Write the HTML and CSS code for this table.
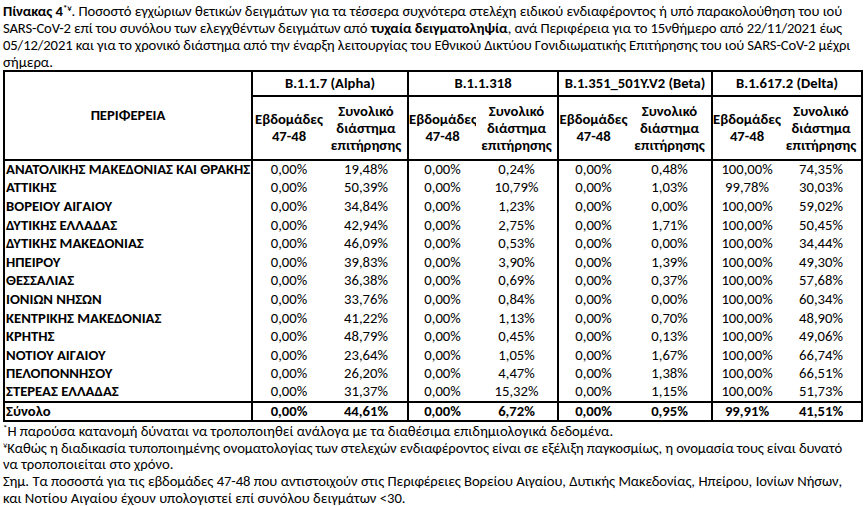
FILE: index.html
```html
<!DOCTYPE html>
<html lang="el">
<head>
<meta charset="utf-8">
<title>Πίνακας 4</title>
<link rel="stylesheet" href="styles.css">
</head>
<body>
<div class="caption">
  <span class="line just"><b>Πίνακας 4<sup>*¥</sup></b>. Ποσοστό εγχώριων θετικών δειγμάτων για τα τέσσερα συχνότερα στελέχη ειδικού ενδιαφέροντος ή υπό παρακολούθηση του ιού</span>
  <span class="line just">SARS-CoV-2 επί του συνόλου των ελεγχθέντων δειγμάτων από <b>τυχαία δειγματοληψία</b>, ανά Περιφέρεια για το 15νθήμερο από 22/11/2021 έως</span>
  <span class="line just">05/12/2021 και για το χρονικό διάστημα από την έναρξη λειτουργίας του Εθνικού Δικτύου Γονιδιωματικής Επιτήρησης του ιού SARS-CoV-2 μέχρι</span>
  <span class="line">σήμερα.</span>
</div>
<table class="data">
  <colgroup>
    <col class="c-region">
    <col class="c-a1"><col class="c-a2">
    <col class="c-b1"><col class="c-b2">
    <col class="c-c1"><col class="c-c2">
    <col class="c-d1"><col class="c-d2">
  </colgroup>
  <thead>
    <tr class="h1">
      <th rowspan="2" class="region-h">ΠΕΡΙΦΕΡΕΙΑ</th>
      <th colspan="2" class="grp">B.1.1.7 (Alpha)</th>
      <th colspan="2" class="grp">B.1.1.318</th>
      <th colspan="2" class="grp">B.1.351_501Y.V2 (Beta)</th>
      <th colspan="2" class="grp">B.1.617.2 (Delta)</th>
    </tr>
    <tr class="h2">
      <th class="gs">Εβδομάδες<br>47-48</th><th>Συνολικό<br>διάστημα<br>επιτήρησης</th>
      <th class="gs">Εβδομάδες<br>47-48</th><th>Συνολικό<br>διάστημα<br>επιτήρησης</th>
      <th class="gs">Εβδομάδες<br>47-48</th><th>Συνολικό<br>διάστημα<br>επιτήρησης</th>
      <th class="gs">Εβδομάδες<br>47-48</th><th>Συνολικό<br>διάστημα<br>επιτήρησης</th>
    </tr>
  </thead>
  <tbody>
    <tr><th>ΑΝΑΤΟΛΙΚΗΣ ΜΑΚΕΔΟΝΙΑΣ ΚΑΙ ΘΡΑΚΗΣ</th><td class="gs">0,00%</td><td>19,48%</td><td class="gs">0,00%</td><td>0,24%</td><td class="gs">0,00%</td><td>0,48%</td><td class="gs">100,00%</td><td>74,35%</td></tr>
    <tr><th>ΑΤΤΙΚΗΣ</th><td class="gs">0,00%</td><td>50,39%</td><td class="gs">0,00%</td><td>10,79%</td><td class="gs">0,00%</td><td>1,03%</td><td class="gs">99,78%</td><td>30,03%</td></tr>
    <tr><th>ΒΟΡΕΙΟΥ ΑΙΓΑΙΟΥ</th><td class="gs">0,00%</td><td>34,84%</td><td class="gs">0,00%</td><td>1,23%</td><td class="gs">0,00%</td><td>0,00%</td><td class="gs">100,00%</td><td>59,02%</td></tr>
    <tr><th>ΔΥΤΙΚΗΣ ΕΛΛΑΔΑΣ</th><td class="gs">0,00%</td><td>42,94%</td><td class="gs">0,00%</td><td>2,75%</td><td class="gs">0,00%</td><td>1,71%</td><td class="gs">100,00%</td><td>50,45%</td></tr>
    <tr><th>ΔΥΤΙΚΗΣ ΜΑΚΕΔΟΝΙΑΣ</th><td class="gs">0,00%</td><td>46,09%</td><td class="gs">0,00%</td><td>0,53%</td><td class="gs">0,00%</td><td>0,00%</td><td class="gs">100,00%</td><td>34,44%</td></tr>
    <tr><th>ΗΠΕΙΡΟΥ</th><td class="gs">0,00%</td><td>39,83%</td><td class="gs">0,00%</td><td>3,90%</td><td class="gs">0,00%</td><td>1,39%</td><td class="gs">100,00%</td><td>49,30%</td></tr>
    <tr><th>ΘΕΣΣΑΛΙΑΣ</th><td class="gs">0,00%</td><td>36,38%</td><td class="gs">0,00%</td><td>0,69%</td><td class="gs">0,00%</td><td>0,37%</td><td class="gs">100,00%</td><td>57,68%</td></tr>
    <tr><th>ΙΟΝΙΩΝ ΝΗΣΩΝ</th><td class="gs">0,00%</td><td>33,76%</td><td class="gs">0,00%</td><td>0,84%</td><td class="gs">0,00%</td><td>0,00%</td><td class="gs">100,00%</td><td>60,34%</td></tr>
    <tr><th>ΚΕΝΤΡΙΚΗΣ ΜΑΚΕΔΟΝΙΑΣ</th><td class="gs">0,00%</td><td>41,22%</td><td class="gs">0,00%</td><td>1,13%</td><td class="gs">0,00%</td><td>0,70%</td><td class="gs">100,00%</td><td>48,90%</td></tr>
    <tr><th>ΚΡΗΤΗΣ</th><td class="gs">0,00%</td><td>48,79%</td><td class="gs">0,00%</td><td>0,45%</td><td class="gs">0,00%</td><td>0,13%</td><td class="gs">100,00%</td><td>49,06%</td></tr>
    <tr><th>ΝΟΤΙΟΥ ΑΙΓΑΙΟΥ</th><td class="gs">0,00%</td><td>23,64%</td><td class="gs">0,00%</td><td>1,05%</td><td class="gs">0,00%</td><td>1,67%</td><td class="gs">100,00%</td><td>66,74%</td></tr>
    <tr><th>ΠΕΛΟΠΟΝΝΗΣΟΥ</th><td class="gs">0,00%</td><td>26,20%</td><td class="gs">0,00%</td><td>4,47%</td><td class="gs">0,00%</td><td>1,38%</td><td class="gs">100,00%</td><td>66,51%</td></tr>
    <tr><th>ΣΤΕΡΕΑΣ ΕΛΛΑΔΑΣ</th><td class="gs">0,00%</td><td>31,37%</td><td class="gs">0,00%</td><td>15,32%</td><td class="gs">0,00%</td><td>1,15%</td><td class="gs">100,00%</td><td>51,73%</td></tr>
  </tbody>
  <tfoot>
    <tr class="total"><th>Σύνολο</th><td class="gs">0,00%</td><td>44,61%</td><td class="gs">0,00%</td><td>6,72%</td><td class="gs">0,00%</td><td>0,95%</td><td class="gs">99,91%</td><td>41,51%</td></tr>
  </tfoot>
</table>
<div class="notes">
  <span class="line"><sup>*</sup>Η παρούσα κατανομή δύναται να τροποποιηθεί ανάλογα με τα διαθέσιμα επιδημιολογικά δεδομένα.</span>
  <span class="line just"><sup>¥</sup>Καθώς η διαδικασία τυποποιημένης ονοματολογίας των στελεχών ενδιαφέροντος είναι σε εξέλιξη παγκοσμίως, η ονομασία τους είναι δυνατό</span>
  <span class="line">να τροποποιείται στο χρόνο.</span>
  <span class="line just">Σημ. Τα ποσοστά για τις εβδομάδες 47-48 που αντιστοιχούν στις Περιφέρειες Βορείου Αιγαίου, Δυτικής Μακεδονίας, Ηπείρου, Ιονίων Νήσων,</span>
  <span class="line">και Νοτίου Αιγαίου έχουν υπολογιστεί επί συνόλου δειγμάτων &lt;30.</span>
</div>
</body>
</html>
```

FILE: styles.css
```css
html, body {
  margin: 0;
  padding: 0;
  background: #fff;
}
body {
  font-family: Carlito, "Liberation Sans", sans-serif;
  font-size: 14.67px;
  color: #000;
  padding: 3px 6px 0 3px;
}
.line {
  display: block;
  white-space: nowrap;
}
.just {
  text-align: justify;
  text-align-last: justify;
  letter-spacing: -0.12px;
}
.caption {
  width: 839px;
  line-height: 17px;
  margin-bottom: -1px;
}
sup {
  font-size: 0.6em;
  line-height: 0;
  vertical-align: 0.55em;
}
.data {
  border-collapse: collapse;
  table-layout: fixed;
  width: 858px;
  border: 2px solid #000;
  line-height: 17px;
}
.c-region { width: 248px; }
.c-a1 { width: 73px; }
.c-a2 { width: 83px; }
.c-b1 { width: 68px; }
.c-b2 { width: 82px; }
.c-c1 { width: 70px; }
.c-c2 { width: 84px; }
.c-d1 { width: 69px; }
.c-d2 { width: 81px; }
.data th, .data td {
  padding: 0;
  white-space: nowrap;
  overflow: hidden;
}
.data td {
  text-align: center;
  font-weight: normal;
}
.data tbody th, .data tfoot th {
  text-align: left;
  padding-left: 1px;
  border-right: 2px solid #000;
}
.data .gs { border-left: 2px solid #000; }
.h1 { height: 25px; }
.h1 .grp { border-left: 2px solid #000; border-bottom: 2px solid #000; }
.region-h { border-right: 2px solid #000; }
.data thead tr:last-child th, .region-h { border-bottom: 2px solid #000; }
.h2 { height: 64px; }
.data tbody tr { height: 18.6px; }
.total { height: 18px; }
.total th, .total td { border-top: 2px solid #000; font-weight: bold; }
.notes {
  width: 839px;
  line-height: 16.8px;
  padding-top: 1px;
}
```
